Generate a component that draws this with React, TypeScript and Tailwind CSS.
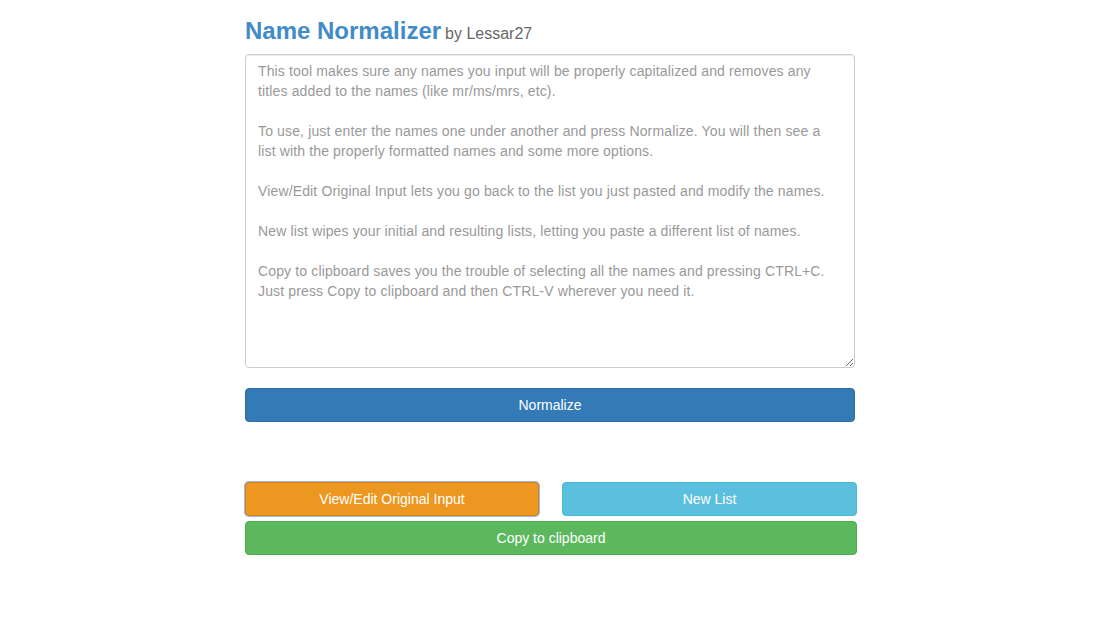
import React from "react";

const text = `This tool makes sure any names you input will be properly capitalized and removes any titles added to the names (like mr/ms/mrs, etc).

To use, just enter the names one under another and press Normalize. You will then see a list with the properly formatted names and some more options.

View/Edit Original Input lets you go back to the list you just pasted and modify the names.

New list wipes your initial and resulting lists, letting you paste a different list of names.

Copy to clipboard saves you the trouble of selecting all the names and pressing CTRL+C. Just press Copy to clipboard and then CTRL-V wherever you need it.`;

export default function App() {
  return (
    <div
      className="min-h-[627px] bg-white text-[14px] text-[#333]"
      style={{ fontFamily: '"Liberation Sans", Arial, sans-serif' }}
    >
      <div className="w-[612px] ml-[245px] pt-[14px]">
        <div className="flex items-baseline h-[34px]">
          <h1 className="text-[24px] font-bold text-[#428bca] leading-[34px]">Name Normalizer</h1>
          <span className="ml-[4px] text-[16px] text-[#666]">by Lessar27</span>
        </div>
        <textarea
          className="mt-[6px] block w-[610px] h-[314px] border border-[#ccc] rounded-[4px] pl-[12px] pr-[19px] py-[6px] text-[14px] leading-[20px] tracking-[0.14px] text-[#999] shadow-[inset_0_1px_1px_rgba(0,0,0,0.075)] outline-none resize-y"
          defaultValue={text}
          readOnly
        />
        <button className="mt-[20px] block w-[610px] h-[34px] rounded-[4px] border border-[#2e6da4] bg-[#337ab7] text-white text-[14px]">
          Normalize
        </button>
        <div className="mt-[60px] flex gap-[23px] w-[612px]">
          <button className="w-[294px] h-[34px] rounded-[4px] border border-[#d58512] bg-[#ec971f] text-white text-[14px] shadow-[0_0_0_1px_#9ab8e8]">
            View/Edit Original Input
          </button>
          <button className="w-[295px] h-[34px] rounded-[4px] border border-[#46b8da] bg-[#5bc0de] text-white text-[14px]">
            New List
          </button>
        </div>
        <button className="mt-[5px] block w-[612px] h-[34px] rounded-[4px] border border-[#4cae4c] bg-[#5cb85c] text-white text-[14px]">
          Copy to clipboard
        </button>
      </div>
    </div>
  );
}
